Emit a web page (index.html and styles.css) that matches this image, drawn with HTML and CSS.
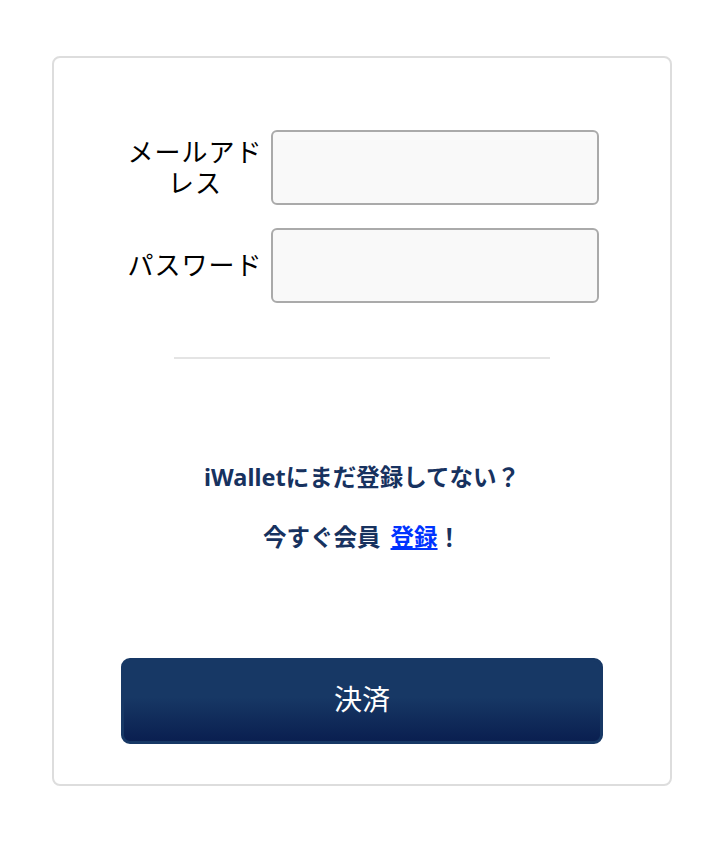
FILE: index.html
```html
<!DOCTYPE html>
<html lang="ja">
  <head>
    <meta charset="UTF-8" />
    <meta name="viewport" content="width=device-width, initial-scale=1.0" />
    <title>iWallet ログイン</title>
    <link rel="stylesheet" href="styles.css">
  </head>
  <body>
    <div class="card">
      <!-- ログインフォーム -->
      <form class="login-form">
        <div class="form-row">
          <label class="form-label" for="email">メールアド<br />レス</label>
          <input class="form-input" type="text" id="email" />
        </div>
        <div class="form-row">
          <label class="form-label" for="password">パスワード</label>
          <input class="form-input" type="password" id="password" />
        </div>
      </form>

      <hr class="divider" />

      <!-- 会員登録の案内 -->
      <div class="signup">
        <p>iWalletにまだ登録してない？</p>
        <p>今すぐ会員 <a href="#">登録</a>！</p>
      </div>

      <button class="pay-button" type="button">決済</button>
    </div>
  </body>
</html>
```

FILE: styles.css
```css
/* 全体 */
body {
  margin: 0;
  padding: 56px 52px;
  background: #ffffff;
  font-family: "Noto Sans", "Noto Sans CJK JP", sans-serif;
  color: #000000;
}

/* カード */
.card {
  border: 2px solid #dddddd;
  border-radius: 8px;
  padding: 72px 0 40px;
  display: flex;
  flex-direction: column;
  align-items: center;
}

/* フォーム */
.login-form {
  width: 480px;
  display: flex;
  flex-direction: column;
  gap: 23px;
}

.form-row {
  display: flex;
  align-items: center;
}

.form-label {
  width: 146px;
  margin-right: 3px;
  text-align: center;
  font-size: 26px;
  letter-spacing: 1px;
  line-height: 31px;
  white-space: nowrap;
}

.form-input {
  width: 328px;
  height: 75px;
  box-sizing: border-box;
  border: 2px solid #aaaaaa;
  border-radius: 6px;
  background: #f9f9f9;
  font-size: 20px;
  padding: 0 10px;
}

/* 区切り線 */
.divider {
  width: 376px;
  margin: 54px 0 0;
  border: none;
  border-top: 2px solid #e4e4e4;
}

/* 登録案内 */
.signup {
  margin-top: 104px;
  text-align: center;
  color: #17325f;
  font-size: 23.5px;
  font-weight: bold;
}

.signup p {
  margin: 0 0 32px;
  line-height: 28px;
}

.signup a {
  margin-left: 4px;
  color: #0033ff;
  text-decoration: underline;
}

/* 決済ボタン */
.pay-button {
  width: 482px;
  height: 86px;
  margin-top: 75px;
  padding: 0 0 6px;
  border: 3px solid #173865;
  border-radius: 9px;
  background: linear-gradient(to bottom, #173865 0%, #173865 45%, #0a1f50 100%);
  color: #ffffff;
  font-family: "Noto Sans CJK JP", sans-serif;
  font-size: 28px;
  cursor: pointer;
}
```
